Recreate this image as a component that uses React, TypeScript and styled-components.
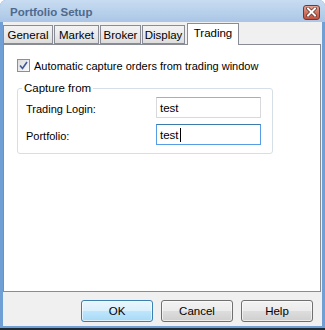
import React from "react";
import styled, { createGlobalStyle } from "styled-components";

const GlobalStyle = createGlobalStyle`
  html, body {
    margin: 0;
    padding: 0;
    background: #ffffff;
  }
  body {
    font-family: "Liberation Sans", Arial, sans-serif;
    font-size: 11px;
    color: #000;
  }
`;

const Window = styled.div`
  width: 325px;
  height: 328px;
  box-sizing: border-box;
  display: flex;
  flex-direction: column;
  background: #6f9fd4;
  border-radius: 6px 6px 0 0;
  padding: 0 3px 2px 3px;
`;

const TitleBar = styled.div`
  height: 23px;
  margin: 0 -3px;
  padding: 0 5px 0 10px;
  display: flex;
  align-items: center;
  justify-content: space-between;
  border-radius: 6px 6px 0 0;
  background: linear-gradient(#c8dcf1, #b6cfea 60%, #aac6e6);
`;

const Title = styled.span`
  font-weight: bold;
  font-size: 11.5px;
  color: #4f6a8c;
  padding-top: 2px;
`;

const CloseButton = styled.div`
  width: 17px;
  height: 15px;
  margin-top: 2px;
  display: flex;
  align-items: center;
  justify-content: center;
  box-sizing: border-box;
  border: 1px solid #6b3a36;
  border-radius: 3px;
  background: linear-gradient(#e3a597, #d07564 50%, #c4503e);
`;

const Client = styled.div`
  flex: 1;
  display: flex;
  flex-direction: column;
  background: #f0f0f0;
`;

const TabStrip = styled.div`
  height: 22px;
  display: flex;
  align-items: flex-end;
  position: relative;
  z-index: 1;
`;

const Tab = styled.div<{ $w: number; $active?: boolean }>`
  width: ${(p) => p.$w}px;
  box-sizing: border-box;
  height: ${(p) => (p.$active ? 22 : 19)}px;
  margin-right: ${(p) => (p.$active ? 0 : 1)}px;
  margin-left: ${(p) => (p.$active ? 1 : 0)}px;
  border: 1px solid #898c95;
  border-bottom: ${(p) => (p.$active ? "none" : "1px solid #898c95")};
  background: ${(p) =>
    p.$active ? "#ffffff" : "linear-gradient(#f3f3f3, #ebebeb 50%, #dddddd)"};
  display: flex;
  align-items: ${(p) => (p.$active ? "flex-start" : "center")};
  justify-content: center;
  padding-top: ${(p) => (p.$active ? 3 : 0)}px;
  margin-bottom: ${(p) => (p.$active ? -1 : 0)}px;
  font-size: 11.5px;
  color: #000;
`;

const Panel = styled.div`
  width: 318px;
  height: 248px;
  box-sizing: border-box;
  background: #ffffff;
  border: 1px solid #898c95;
  padding: 14px 0 0 13px;
  display: flex;
  flex-direction: column;
`;

const CheckRow = styled.label`
  display: flex;
  align-items: center;
  gap: 4px;
  height: 13px;
  font-size: 11px;
`;

const CheckBox = styled.span`
  width: 13px;
  height: 13px;
  box-sizing: border-box;
  border: 1px solid #8e8f8f;
  background: linear-gradient(135deg, #dcdcdc, #fbfbfb);
  display: flex;
  align-items: center;
  justify-content: center;
`;

const Group = styled.fieldset`
  width: 256px;
  box-sizing: border-box;
  margin: 9px 0 0 0;
  padding: 2px 11px 8px 8px;
  border: 1px solid #d5dfe5;
  border-radius: 3px;
  display: grid;
  grid-template-columns: 130px 105px;
  row-gap: 6px;
  align-items: center;
`;

const Legend = styled.legend`
  padding: 0 2px;
  margin-left: -4px;
  line-height: 14px;
  font-size: 11.5px;
`;

const FieldLabel = styled.span`
  font-size: 11px;
  color: #000;
  padding-top: 3px;
`;

const TextBox = styled.div<{ $focused?: boolean }>`
  height: 21px;
  box-sizing: border-box;
  border: 1px solid ${(p) => (p.$focused ? "#569de5" : "#d7d9dd")};
  border-top-color: ${(p) => (p.$focused ? "#3d7bad" : "#abadb3")};
  background: #ffffff;
  padding: 0 3px;
  display: flex;
  align-items: center;
  font-size: 11.5px;
`;

const Caret = styled.span`
  width: 1px;
  height: 14px;
  background: #000;
  margin-left: 1px;
`;

const ButtonBar = styled.div`
  display: flex;
  justify-content: flex-end;
  gap: 8px;
  padding: 8px 9px 4px 0;
`;

const Button = styled.button<{ $default?: boolean }>`
  width: 72px;
  height: 22px;
  border-radius: 3px;
  font-family: "Liberation Sans", Arial, sans-serif;
  font-size: 11.5px;
  color: #000;
  padding: 0;
  border: 1px solid ${(p) => (p.$default ? "#3c7fb1" : "#707070")};
  background: ${(p) =>
    p.$default
      ? "linear-gradient(#eaf6fd, #d9f0fc 50%, #bee6fd 51%, #a7d9f5)"
      : "linear-gradient(#f2f2f2, #ebebeb 50%, #dddddd 51%, #cfcfcf)"};
  box-shadow: inset 0 0 0 1px rgba(255, 255, 255, 0.6);
`;

const Ground = styled.div`
  height: 2px;
  background: #1d2a33;
`;

const tabs = [
  { name: "General", w: 50 },
  { name: "Market", w: 45 },
  { name: "Broker", w: 41 },
  { name: "Display", w: 43 },
  { name: "Trading", w: 52, active: true },
];

export default function App() {
  return (
    <>
      <GlobalStyle />
      <Window>
        <TitleBar>
          <Title>Portfolio Setup</Title>
          <CloseButton>
            <svg width="11" height="10" viewBox="0 0 11 10">
              <path
                d="M2 1.5 L9 8.5 M9 1.5 L2 8.5"
                stroke="#5a2a25"
                strokeWidth="3.4"
                strokeLinecap="square"
              />
              <path
                d="M2 1.5 L9 8.5 M9 1.5 L2 8.5"
                stroke="#ffffff"
                strokeWidth="2"
                strokeLinecap="square"
              />
            </svg>
          </CloseButton>
        </TitleBar>
        <Client>
          <TabStrip>
            {tabs.map((t) => (
              <Tab key={t.name} $w={t.w} $active={t.active}>
                {t.name}
              </Tab>
            ))}
          </TabStrip>
          <Panel>
            <CheckRow>
              <CheckBox>
                <svg width="9" height="9" viewBox="0 0 9 9">
                  <path
                    d="M1 4.5 L3.5 7.5 L8 1"
                    fill="none"
                    stroke="#3f5a9a"
                    strokeWidth="1.6"
                  />
                </svg>
              </CheckBox>
              Automatic capture orders from trading window
            </CheckRow>
            <Group>
              <Legend>Capture from</Legend>
              <FieldLabel>Trading Login:</FieldLabel>
              <TextBox>test</TextBox>
              <FieldLabel>Portfolio:</FieldLabel>
              <TextBox $focused>
                test
                <Caret />
              </TextBox>
            </Group>
          </Panel>
          <ButtonBar>
            <Button $default>OK</Button>
            <Button>Cancel</Button>
            <Button>Help</Button>
          </ButtonBar>
        </Client>
      </Window>
      <Ground />
    </>
  );
}
